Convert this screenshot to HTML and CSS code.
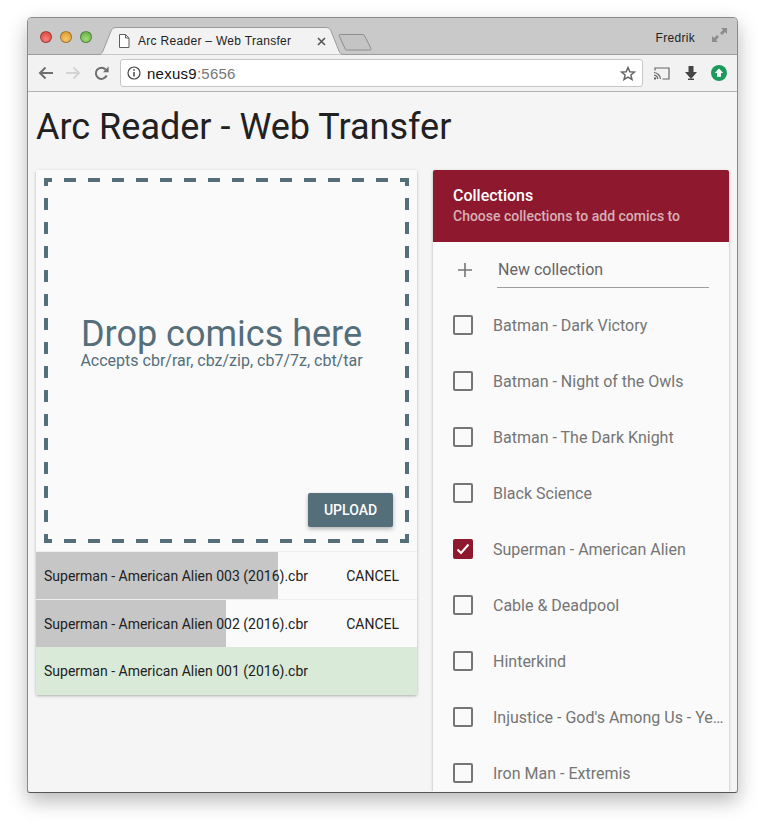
FILE: index.html
```html
<!DOCTYPE html>
<html lang="en">
<head>
  <meta charset="UTF-8">
  <title>Arc Reader - Web Transfer</title>
  <link rel="stylesheet" href="styles.css">
</head>
<body>
  <div class="window">

    <div class="titlebar">
      <div class="lights">
        <span class="light red"></span>
        <span class="light yellow"></span>
        <span class="light green"></span>
      </div>
      <div class="tab">
        <svg class="tab-shape" width="246" height="28" viewBox="0 0 246 28">
          <path d="M0 27.5H1C3 27.5 4 26 5 24L13 4C14 2 15 .5 18 .5H228C231 .5 232 2 233 4L241 24C242 26 243 27.5 246 27.5" fill="#f2f2f2" stroke="#9c9c9c"/>
        </svg>
        <svg class="tab-icon" width="12" height="14" viewBox="0 0 12 14">
          <path d="M1.5 .5H7.5L11 4V13.5H1.5Z M7.5 .5V4H11" fill="#fff" stroke="#5f5f5f"/>
        </svg>
        <span class="tab-title">Arc Reader – Web Transfer</span>
        <svg class="tab-close" width="9" height="9" viewBox="0 0 9 9">
          <path d="M1 1L8 8M8 1L1 8" stroke="#555" stroke-width="1.6"/>
        </svg>
      </div>
      <svg class="new-tab" width="34" height="17" viewBox="0 0 34 17">
        <path d="M1 1.5C.7 1 1 .5 1.6 .5H25C25.6 .5 26 .8 26.3 1.3L33 14.5C33.3 15.5 33 16 32 16H8.5C8 16 7.6 15.7 7.3 15.2Z" fill="#c4c4c4" stroke="#8e8e8e"/>
      </svg>
      <span class="profile">Fredrik</span>
      <svg class="fullscreen" width="15" height="15" viewBox="0 0 15 15">
        <path d="M9 0H15V6L13 4L10 7L8 5L11 2Z" fill="#8c8c8c"/>
        <path d="M0 8L2 10L5 7L7 9L4 12L6 14H0Z" fill="#8c8c8c"/>
      </svg>
    </div>

    <div class="toolbar">
      <svg class="nav" width="16" height="14" viewBox="0 0 16 14">
        <path d="M15 7H2.5M7.5 1.5L2 7L7.5 12.5" fill="none" stroke="#6e6e6e" stroke-width="2"/>
      </svg>
      <svg class="nav forward" width="16" height="14" viewBox="0 0 16 14">
        <path d="M1 7H13.5M8.5 1.5L14 7L8.5 12.5" fill="none" stroke="#d4d4d4" stroke-width="2"/>
      </svg>
      <svg class="nav" width="15" height="15" viewBox="0 0 15 15">
        <path d="M12.6 9.5A5.6 5.6 0 1 1 11.6 3.5" fill="none" stroke="#6e6e6e" stroke-width="2"/>
        <path d="M9 6.2H14.6V.6Z" fill="#6e6e6e"/>
      </svg>
      <div class="omnibox">
        <svg width="14" height="14" viewBox="0 0 14 14">
          <circle cx="7" cy="7" r="6" fill="none" stroke="#444" stroke-width="1.2"/>
          <path d="M7 6V10.6M7 3.2V4.8" stroke="#444" stroke-width="1.5"/>
        </svg>
        <span class="url">nexus9<span class="port">:5656</span></span>
        <svg class="star" width="16" height="15" viewBox="0 0 16 15">
          <path d="M8 1.5L9.8 5.8L14.4 6.1L10.9 9L12 13.5L8 11.1L4 13.5L5.1 9L1.6 6.1L6.2 5.8Z" fill="none" stroke="#666" stroke-width="1.5"/>
        </svg>
      </div>
      <div class="extensions">
        <svg width="16" height="13" viewBox="0 0 16 13">
          <path d="M1 3.5V1H15V12H8.5" fill="none" stroke="#666" stroke-width="1.2"/>
          <path d="M0 5.5A7 7 0 0 1 6.5 12M0 8.2A4.3 4.3 0 0 1 3.8 12" fill="none" stroke="#666" stroke-width="1.2"/>
          <circle cx="1" cy="11.4" r="1.2" fill="#666"/>
        </svg>
        <svg width="12" height="14" viewBox="0 0 12 14">
          <path d="M3.5 0H8.5V6H12L6 13L0 6H3.5Z" fill="#444"/>
          <rect x="3" y="12.6" width="6" height="1.4" fill="#444"/>
        </svg>
        <svg width="16" height="16" viewBox="0 0 16 16">
          <circle cx="8" cy="8" r="8" fill="#1c9a5c"/>
          <path d="M8 3.5L12.2 8H10V11.8H6V8H3.8Z" fill="#fff"/>
        </svg>
      </div>
    </div>

    <div class="page">
      <h1>Arc Reader - Web Transfer</h1>
      <div class="columns">

        <div class="left">
          <div class="uploader">
            <div class="dropzone">
              <div class="drop-title">Drop comics here</div>
              <div class="drop-sub">Accepts cbr/rar, cbz/zip, cb7/7z, cbt/tar</div>
              <button class="upload-btn">UPLOAD</button>
            </div>
          </div>
          <div class="file">
            <div class="progress" style="width: 242px"></div>
            <span class="file-name">Superman - American Alien 003 (2016).cbr</span>
            <button class="cancel">CANCEL</button>
          </div>
          <div class="file">
            <div class="progress" style="width: 190px"></div>
            <span class="file-name">Superman - American Alien 002 (2016).cbr</span>
            <button class="cancel">CANCEL</button>
          </div>
          <div class="file done">
            <span class="file-name">Superman - American Alien 001 (2016).cbr</span>
          </div>
        </div>

        <div class="right">
          <div class="panel-head">
            <div class="panel-title">Collections</div>
            <div class="panel-sub">Choose collections to add comics to</div>
          </div>
          <div class="new-row">
            <svg width="16" height="16" viewBox="0 0 16 16">
              <path d="M8 1V15M1 8H15" stroke="#757575" stroke-width="1.6"/>
            </svg>
            <div class="new-input">New collection</div>
          </div>
          <ul class="collections">
            <li><span class="check"></span><span class="label">Batman - Dark Victory</span></li>
            <li><span class="check"></span><span class="label">Batman - Night of the Owls</span></li>
            <li><span class="check"></span><span class="label">Batman - The Dark Knight</span></li>
            <li><span class="check"></span><span class="label">Black Science</span></li>
            <li>
              <span class="check on">
                <svg width="14" height="12" viewBox="0 0 14 12"><path d="M1.5 6.5L5 10L12.5 1.5" fill="none" stroke="#fff" stroke-width="2"/></svg>
              </span>
              <span class="label">Superman - American Alien</span>
            </li>
            <li><span class="check"></span><span class="label">Cable &amp; Deadpool</span></li>
            <li><span class="check"></span><span class="label">Hinterkind</span></li>
            <li><span class="check"></span><span class="label">Injustice - God's Among Us - Ye…</span></li>
            <li><span class="check"></span><span class="label">Iron Man - Extremis</span></li>
          </ul>
        </div>

      </div>
    </div>
  </div>
</body>
</html>
```

FILE: styles.css
```css
html, body {
  height: 100%;
}

body {
  margin: 0;
  background: #fff;
  font-family: Roboto, sans-serif;
  overflow: hidden;
}

.window {
  box-sizing: border-box;
  width: 711px;
  height: 776px;
  margin: 17px 0 0 27px;
  border: 1px solid #8a8a8a;
  border-bottom-color: #555;
  border-radius: 5px 5px 3px 3px;
  background: #f5f5f5;
  box-shadow: 0 8px 20px rgba(0, 0, 0, 0.28);
  overflow: hidden;
}

/* browser chrome */
.titlebar {
  display: flex;
  align-items: center;
  height: 37px;
  box-sizing: border-box;
  padding-left: 12px;
  background: #c9c9c9;
  border-bottom: 1px solid #9c9c9c;
  font-family: "Liberation Sans", sans-serif;
}

.lights {
  display: flex;
  gap: 8px;
  margin-top: 1px;
}

.light {
  width: 12px;
  height: 12px;
  box-sizing: border-box;
  border-radius: 50%;
  border: 1px solid rgba(0, 0, 0, 0.3);
}

.red { background: radial-gradient(circle at 50% 70%, #f5837a, #d93a34); }
.yellow { background: radial-gradient(circle at 50% 70%, #f7c766, #d8922a); }
.green { background: radial-gradient(circle at 50% 70%, #a0dc76, #5ca840); }

.tab {
  position: relative;
  display: flex;
  align-items: center;
  align-self: flex-end;
  width: 246px;
  height: 28px;
  margin-left: 6px;
  margin-bottom: -1px;
  font-size: 12px;
  color: #222;
}

.tab-shape {
  position: absolute;
  left: 0;
  top: 0;
}

.tab-icon,
.tab-title,
.tab-close {
  position: relative;
}

.tab-icon {
  margin-left: 20px;
}

.tab-title {
  margin-left: 8px;
  letter-spacing: 0.3px;
  white-space: nowrap;
}

.tab-close {
  margin-left: 26px;
}

.new-tab {
  align-self: flex-end;
  margin: 0 0 3px -6px;
}

.profile {
  margin: 3px 0 0 auto;
  font-size: 12px;
  color: #222;
  letter-spacing: 0.3px;
}

.fullscreen {
  margin: -2px 10px 0 17px;
}

.toolbar {
  display: flex;
  align-items: center;
  height: 37px;
  box-sizing: border-box;
  padding-left: 10px;
  background: #f2f2f2;
  border-bottom: 1px solid #b4b4b4;
}

.nav {
  margin-right: 11px;
}

.forward {
  margin-right: 13px;
}

.omnibox {
  display: flex;
  align-items: center;
  gap: 6px;
  box-sizing: border-box;
  width: 523px;
  height: 28px;
  padding: 0 6px;
  background: #fff;
  border: 1px solid #c6c6c6;
  border-radius: 3px;
}

.url {
  font-family: "Liberation Sans", sans-serif;
  font-size: 15px;
  letter-spacing: 0.25px;
  color: #111;
}

.port {
  color: #777;
}

.star {
  margin-left: auto;
}

.extensions {
  display: flex;
  align-items: center;
  gap: 15px;
  margin-left: 11px;
}

.extensions svg:last-child {
  margin-left: -1px;
}

/* page */
.page {
  height: 699px;
  box-sizing: border-box;
  padding: 0 8px;
  overflow: hidden;
}

h1 {
  margin: 0;
  height: 78px;
  line-height: 70px;
  font-size: 36px;
  font-weight: 400;
  color: #212121;
}

.columns {
  display: grid;
  grid-template-columns: 381px 296px;
  gap: 16px;
  align-items: start;
}

.left {
  border-radius: 2px;
  box-shadow: 0 1px 3px rgba(0, 0, 0, 0.3);
}

.uploader {
  padding: 8px;
  background: #fafafa;
}

.dropzone {
  position: relative;
  box-sizing: border-box;
  height: 365px;
  padding: 139px 10px 0 0;
  text-align: center;
  color: #546e7a;
  background:
    linear-gradient(90deg, #546e7a 50%, transparent 50%) -4px 0 / 24px 4px repeat-x,
    linear-gradient(90deg, #546e7a 50%, transparent 50%) -4px 100% / 24px 4px repeat-x,
    linear-gradient(#546e7a 50%, transparent 50%) 0 -4px / 4px 24px repeat-y,
    linear-gradient(#546e7a 50%, transparent 50%) 100% -4px / 4px 24px repeat-y;
}

.drop-title {
  font-size: 36px;
  line-height: 35px;
}

.drop-sub {
  font-size: 16px;
  line-height: 18px;
}

.upload-btn {
  position: absolute;
  right: 16px;
  bottom: 16px;
  width: 85px;
  height: 34px;
  padding: 0;
  border: none;
  border-radius: 2px;
  background: #546e7a;
  color: #fff;
  font: 500 14px Roboto, sans-serif;
  box-shadow: 0 2px 4px rgba(0, 0, 0, 0.3);
}

.file {
  position: relative;
  display: flex;
  align-items: center;
  justify-content: space-between;
  height: 48px;
  padding: 0 8px;
  background: #fafafa;
  border-top: 1px solid #eee;
  box-sizing: border-box;
  font-size: 14px;
  color: #212121;
}

.file.done {
  background: #d9ead8;
  border-top: none;
}

.progress {
  position: absolute;
  left: 0;
  top: 0;
  bottom: 0;
  background: #c6c6c6;
}

.file-name {
  position: relative;
}

.cancel {
  position: relative;
  padding: 0 10px 0 0;
  border: none;
  background: none;
  font: 400 14px Roboto, sans-serif;
  color: #212121;
}

.right {
  background: #fafafa;
  border-radius: 2px;
  box-shadow: 0 1px 3px rgba(0, 0, 0, 0.3);
}

.panel-head {
  box-sizing: border-box;
  height: 72px;
  padding: 16px 20px;
  background: #8e182d;
  border-radius: 2px 2px 0 0;
}

.panel-title {
  font-size: 16px;
  font-weight: 500;
  line-height: 19px;
  color: #fff;
}

.panel-sub {
  margin-top: 2px;
  font-size: 14px;
  font-weight: 500;
  line-height: 19px;
  color: rgba(255, 255, 255, 0.66);
}

.new-row {
  display: flex;
  align-items: flex-start;
  height: 55px;
  padding: 10px 20px 0 24px;
  box-sizing: border-box;
}

.new-row svg {
  margin-top: 10px;
}

.new-input {
  flex: 1;
  height: 35px;
  margin-left: 24px;
  padding-left: 1px;
  line-height: 35px;
  font-size: 16px;
  color: #666;
  border-bottom: 1px solid #9e9e9e;
}

.collections {
  margin: 0;
  padding: 0;
  list-style: none;
}

.collections li {
  display: flex;
  align-items: center;
  gap: 20px;
  height: 56px;
  padding: 0 0 0 20px;
}

.check {
  flex: none;
  display: flex;
  align-items: center;
  justify-content: center;
  box-sizing: border-box;
  width: 20px;
  height: 20px;
  border: 2px solid #757575;
  border-radius: 2px;
}

.check.on {
  border-color: #8e182d;
  background: #8e182d;
}

.label {
  font-size: 16px;
  color: #757575;
  white-space: nowrap;
}
```
